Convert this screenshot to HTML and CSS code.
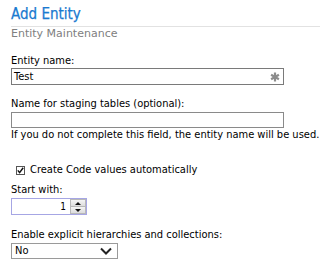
FILE: index.html
```html
<!DOCTYPE html>
<html>
<head>
<meta charset="utf-8">
<link rel="stylesheet" href="styles.css">
</head>
<body>
<div class="page">
  <div class="header">
    <div class="title">Add Entity</div>
  </div>
  <div class="subtitle">Entity Maintenance</div>

  <div class="label first">Entity name:</div>
  <div class="field wide required">
    <span class="value">Test</span>
    <svg class="asterisk" width="10" height="10" viewBox="0 0 10 10">
      <g stroke="#8c8c8c" stroke-width="2.2" stroke-linecap="butt">
        <line x1="5" y1="0.5" x2="5" y2="9.5"/>
        <line x1="1.1" y1="2.75" x2="8.9" y2="7.25"/>
        <line x1="1.1" y1="7.25" x2="8.9" y2="2.75"/>
      </g>
    </svg>
  </div>

  <div class="label">Name for staging tables (optional):</div>
  <div class="field wide staging"></div>
  <div class="help">If you do not complete this field, the entity name will be used.</div>

  <div class="check-row">
    <span class="checkbox">
      <svg width="7" height="7" viewBox="0 0 7 7"><polyline points="0.8,3.4 2.6,5.6 6.2,0.8" fill="none" stroke="#111" stroke-width="1.5"/></svg>
    </span>
    <span class="check-label">Create Code values automatically</span>
  </div>

  <div class="label start">Start with:</div>
  <div class="spinner">
    <span class="spin-value">1</span>
    <span class="spin-buttons">
      <span class="spin-btn up"><span class="tri-up"></span></span>
      <span class="spin-btn down"><span class="tri-down"></span></span>
    </span>
  </div>

  <div class="label enable">Enable explicit hierarchies and collections:</div>
  <div class="select">
    <span class="select-value">No</span>
    <svg class="chevron" width="12" height="8" viewBox="0 0 12 8"><polyline points="1,1.5 6,6.5 11,1.5" fill="none" stroke="#222" stroke-width="2"/></svg>
  </div>
</div>
</body>
</html>
```

FILE: styles.css
```css
html, body {
  margin: 0;
  padding: 0;
  background: #ffffff;
}

.page {
  padding-left: 11px;
  font-family: "DejaVu Sans Condensed", "DejaVu Sans", sans-serif;
  font-size: 11px;
  line-height: 14px;
  color: #000;
}

.header {
  border-bottom: 1px solid #e2e2e2;
  padding-top: 5px;
  padding-bottom: 3px;
}

.title {
  font-size: 15px;
  line-height: 18px;
  color: #1a7ad0;
  -webkit-text-stroke: 0.25px #1a7ad0;
}

.subtitle {
  font-family: "DejaVu Sans", sans-serif;
  font-size: 11px;
  line-height: 14px;
  color: #808080;
}

.label {
  margin-top: 12px;
}

.label.first {
  margin-top: 13px;
}

.field {
  box-sizing: border-box;
  width: 273px;
  border: 1px solid #7a7a7a;
  position: relative;
}

.required {
  height: 17px;
  padding-left: 2px;
  line-height: 15px;
}

.staging {
  height: 16px;
  margin-top: 1px;
  border-color: #8a8a8a;
}

.asterisk {
  position: absolute;
  right: 3px;
  top: 3px;
}

.help {
  line-height: 14px;
}

.check-row {
  display: flex;
  align-items: center;
  margin-top: 21px;
  height: 14px;
}

.checkbox {
  box-sizing: border-box;
  width: 9px;
  height: 9px;
  border: 1px solid #555;
  margin-left: 5px;
  margin-right: 5px;
  display: flex;
  align-items: center;
  justify-content: center;
  background: #fff;
}

.checkbox svg {
  display: block;
}

.label.start {
  margin-top: 6px;
}

.spinner {
  box-sizing: border-box;
  width: 76px;
  height: 17px;
  margin-top: 1px;
  border: 1px solid #a6a6e4;
  display: flex;
}

.spin-value {
  flex: 1;
  text-align: right;
  padding-right: 4px;
  line-height: 15px;
  font-size: 10px;
}

.spin-buttons {
  width: 16px;
  display: flex;
  flex-direction: column;
}

.spin-btn {
  flex: 1;
  box-sizing: border-box;
  background: linear-gradient(#f4f4f4, #dcdcdc);
  border: 1px solid #b8b8b8;
  display: flex;
  align-items: center;
  justify-content: center;
}

.spin-btn.down {
  border-top: none;
}

.tri-up {
  width: 0;
  height: 0;
  border-left: 3px solid transparent;
  border-right: 3px solid transparent;
  border-bottom: 3px solid #111;
}

.tri-down {
  width: 0;
  height: 0;
  border-left: 3px solid transparent;
  border-right: 3px solid transparent;
  border-top: 3px solid #111;
}

.label.enable {
  margin-top: 13px;
}

.select {
  box-sizing: border-box;
  width: 107px;
  height: 16px;
  margin-top: 1px;
  border: 1px solid #9a9a9a;
  display: flex;
  align-items: center;
  justify-content: space-between;
  padding-left: 3px;
  padding-right: 5px;
}

.select-value {
  line-height: 14px;
}

.chevron {
  display: block;
}
```
